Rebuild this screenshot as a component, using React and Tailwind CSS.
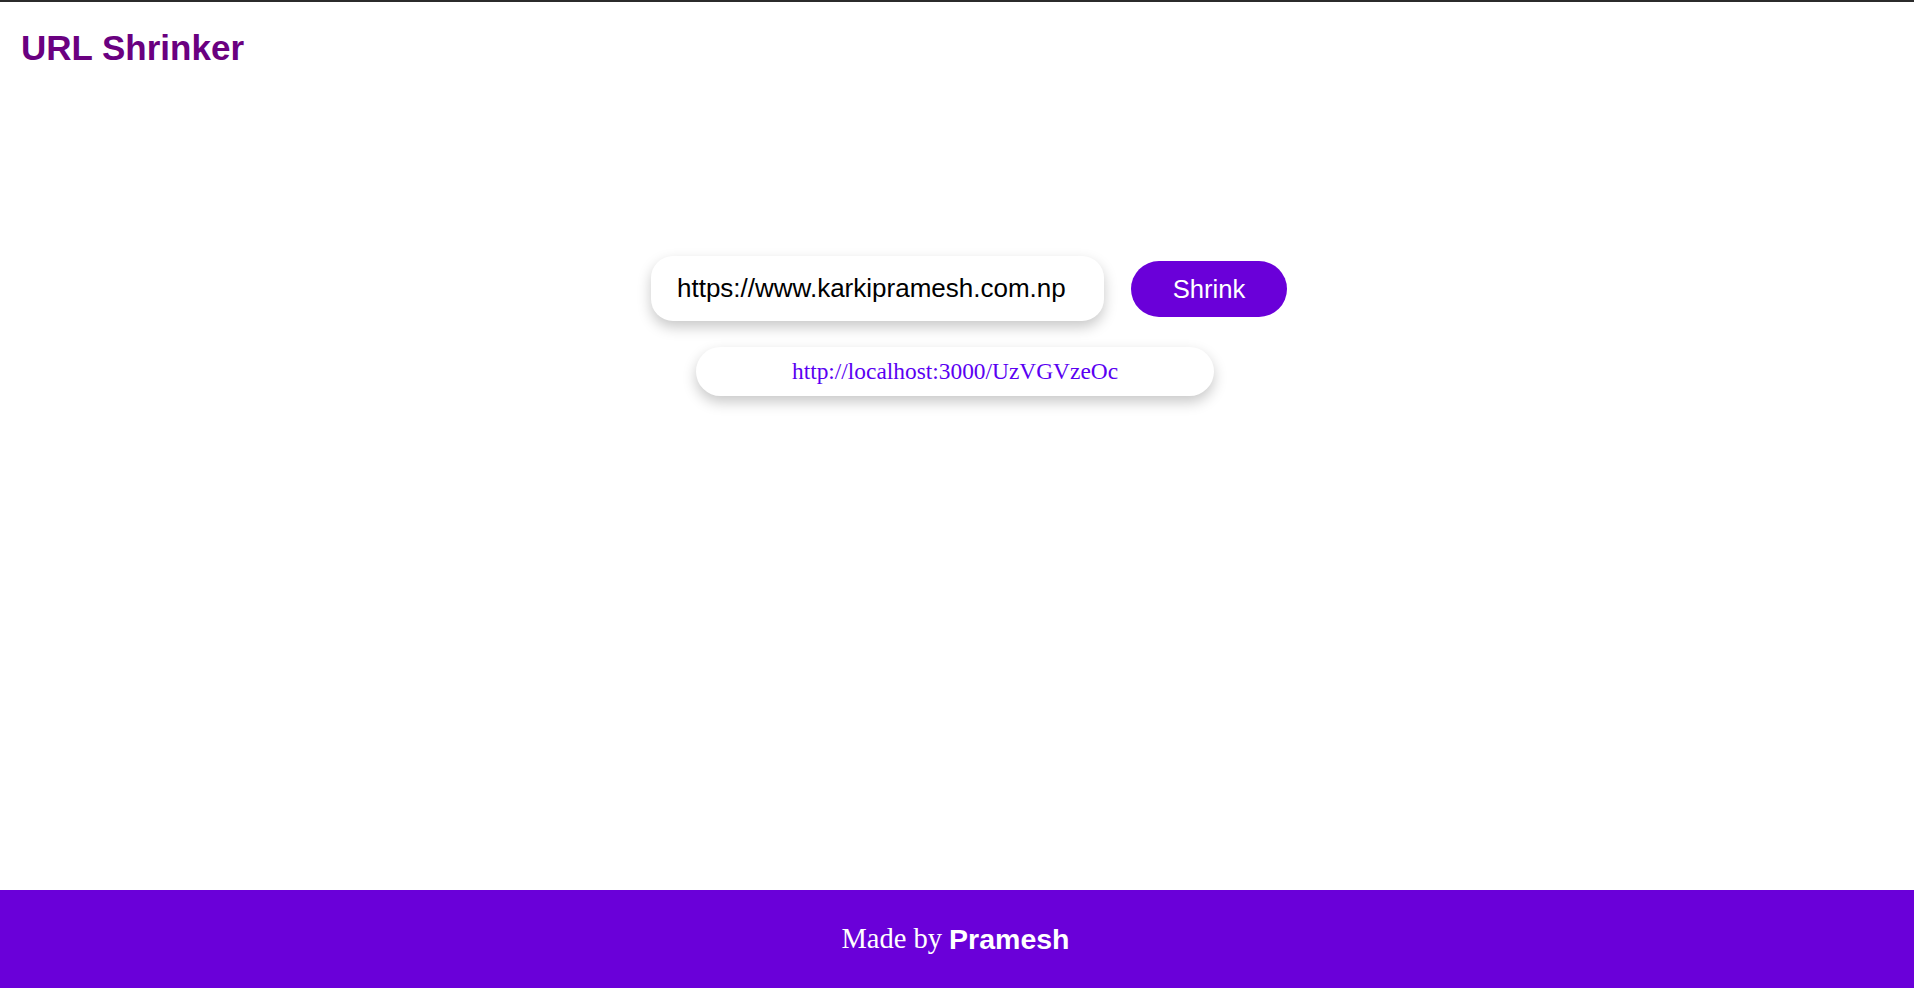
import React, { useState } from 'react';

const App = () => {
  const [url, setUrl] = useState('https://www.karkipramesh.com.np');
  const shortUrl = 'http://localhost:3000/UzVGVzeOc';

  return (
    <div className="h-screen flex flex-col bg-white border-t-2 border-[#2b2b2b]">
      <header className="pl-[21px] pt-[26px]">
        <h1 className="font-['Liberation_Sans',Arial,sans-serif] font-bold text-[35px] leading-[1.15] text-[#6a0080]">
          URL Shrinker
        </h1>
      </header>

      <main className="flex-1 flex flex-col items-center pt-[188px]">
        <div className="flex items-center justify-center gap-[27px] pl-[24px] w-full">
          <input
            type="text"
            value={url}
            onChange={(e) => setUrl(e.target.value)}
            className="w-[453px] h-[65px] rounded-[22px] px-[26px] bg-white text-black outline-none font-['Liberation_Sans',Arial,sans-serif] text-[26px] shadow-[0_6px_14px_rgba(0,0,0,0.22)]"
          />
          <button className="w-[156px] h-[56px] rounded-full bg-[#6a00d9] text-white font-['Liberation_Sans',Arial,sans-serif] text-[25.6px]">
            Shrink
          </button>
        </div>

        <div className="mt-[26px] mr-[4px] w-[518px] h-[49px] rounded-full bg-white flex items-center justify-center shadow-[0_6px_14px_rgba(0,0,0,0.22)]">
          <a
            href="#"
            className="font-['Liberation_Serif','Times_New_Roman',serif] text-[23.4px] text-[#5a00f2]"
          >
            {shortUrl}
          </a>
        </div>
      </main>

      <footer className="h-[98px] bg-[#6a00d9] flex items-center justify-center text-white text-[28.5px] pr-[3px]">
        <span className="font-['Liberation_Serif','Times_New_Roman',serif]">Made by&nbsp;</span>
        <span className="font-['Liberation_Sans',Arial,sans-serif] font-bold">Pramesh</span>
      </footer>
    </div>
  );
};

export default App;
